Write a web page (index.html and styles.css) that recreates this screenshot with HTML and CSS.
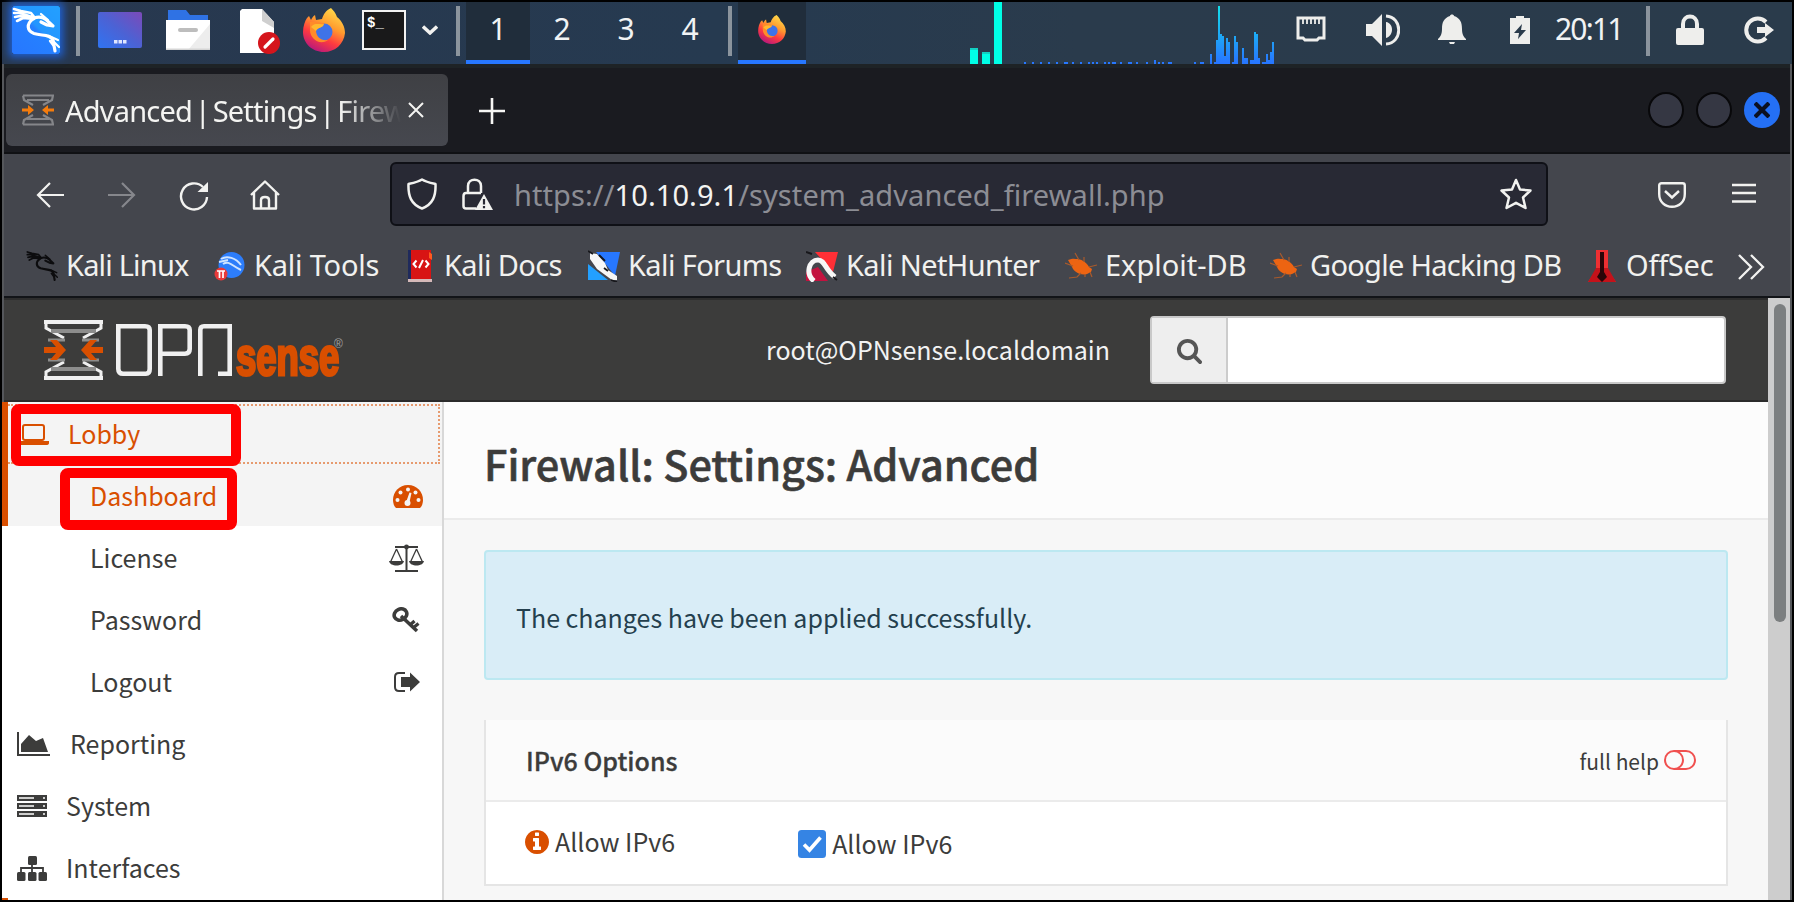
FILE: index.html
```
<!DOCTYPE html>
<html lang="en">
<head>
<meta charset="utf-8">
<title>Advanced | Settings | Firewall</title>
<link rel="stylesheet" href="styles.css">
</head>
<body>
<svg class="defs" width="0" height="0">
  <defs>
    <linearGradient id="ffx" x1="0.8" y1="0" x2="0.3" y2="1"><stop offset="0" stop-color="#ffe14d"/><stop offset=".4" stop-color="#ff9a2e"/><stop offset=".68" stop-color="#ff3b3f"/><stop offset="1" stop-color="#b5177f"/></linearGradient>
    <linearGradient id="kali" x1="0" y1="1" x2="1" y2="0"><stop offset="0" stop-color="#2777ff"/><stop offset=".5" stop-color="#2580ff"/><stop offset=".55" stop-color="#2396ff"/><stop offset="1" stop-color="#23a0ff"/></linearGradient>
    <linearGradient id="desk" x1="0" y1="1" x2="1" y2="0"><stop offset="0" stop-color="#2f74f2"/><stop offset=".5" stop-color="#4c62d4"/><stop offset="1" stop-color="#7c4ab8"/></linearGradient>
    <linearGradient id="net" gradientUnits="userSpaceOnUse" x1="0" y1="4" x2="0" y2="62"><stop offset="0" stop-color="#12e3ea"/><stop offset="1" stop-color="#2777ff"/></linearGradient>
    <symbol id="dragon" viewBox="0 0 48 48">
      <g fill="none" stroke="currentColor" stroke-linecap="round" stroke-linejoin="round">
        <path stroke-width="2.600" d="M2 3 9 5 19 7 23 12M2 7 8 7 20 11M3 11 8 10 21 13M5 15 11 12 22 13"/>
        <path stroke-width="3.200" d="M22 12C32 9 35 15 41 20L35 19 29 16"/>
        <path stroke-width="3.200" d="M21 13C14 18 15 25 22 27.500C30 30 38 28 41 34L43 45"/>
        <path stroke-width="2.200" d="M37 30 46 34M40 34 47 41M38 35 41 39M29 8 36 14"/>
      </g>
    </symbol>
    <symbol id="firefox" viewBox="0 0 42 44">
      <path fill="url(#ffx)" d="M28 0C32 4 33 6 34 9C39 13 42 19 42 25C41 36 32 44 21 44C9 44 0 35 0 24C0 18 2 13 4 10L6 8 8 12C9 10 10 8 12 7L13 12 19 11C20 7 23 2 28 0Z"/>
      <circle cx="21" cy="24" r="8.500" fill="#3f73e8"/>
      <path fill="#ff8b2a" d="M7 14C12 13 16 15 21 15L20 18C17 20 15 20 13 22C13 29 18 33 25 32C17 38 7 31 7 22Z"/>
      <path fill="#ffb92f" d="M8 19C12 14 16 17 21 16C20 20 15 19 13 23Z"/>
    </symbol>
    <symbol id="bug" viewBox="0 0 32 32">
      <path fill="#ed6412" d="M3 10C8 8 10 9 13 9C18 10 22 13 24 17L27 19 26 22 22 24C16 26 9 22 7 17Z"/>
      <path fill="none" stroke="#a95a2c" stroke-width="1.200" d="M0 13 8 16M10 3 14 10M19 7 19 12M24 17 32 15M25 22 27 27M16 23 12 27 4 28M20 24 20 27"/>
    </symbol>
  </defs>
</svg>
<div class="screen">
  <header class="panel">
    <svg class="i-kali" width="48" height="48" viewBox="0 0 48 48"><rect width="48" height="48" rx="2" fill="url(#kali)"/><use href="#dragon" width="48" height="48"/></svg>
    <i class="sep s1"></i>
    <svg class="i-desk" width="44" height="36" viewBox="0 0 44 36"><rect width="44" height="36" rx="2" fill="url(#desk)"/><path fill="#dfe6ff" d="M16 28h3.500v3.500H16zM20.500 28H24v3.500h-3.500zM25 28h3.500v3.500H25z"/></svg>
    <svg class="i-folder" width="44" height="40" viewBox="0 0 44 40"><path fill="#2f72e4" d="M2 0H20L24 5H42V12H2Z"/><path fill="#fff" d="M0 10H44V40H0Z"/><path fill="#ededed" d="M44 14V40H22Z"/><path fill="#d5d5d5" d="M0 38.500H44V40H0Z"/><rect x="12" y="18" width="20" height="4" rx="2" fill="#bdbdbd"/></svg>
    <svg class="i-doc" width="42" height="46" viewBox="0 0 42 46"><path fill="#fff" d="M0 2 2 0H22L34 13V44H0Z"/><path fill="#cfcfcf" d="M22 0 34 13V19L22 12Z"/><circle cx="29" cy="34" r="11" fill="#d5151c"/><path stroke="#fff" stroke-width="3.200" stroke-linecap="round" d="M25 38 33 30"/></svg>
    <svg class="i-ff" width="42" height="44"><use href="#firefox" width="42" height="44"/></svg>
    <div class="i-term">$_</div>
    <svg class="i-chev" width="16" height="10" viewBox="0 0 16 10"><path fill="none" stroke="#f2f2f0" stroke-width="3.400" d="M1 1.500 8 8 15 1.500"/></svg>
    <i class="sep s2"></i>
    <nav class="ws"><b class="on">1</b><b>2</b><b>3</b><b>4</b></nav>
    <i class="sep s3"></i>
    <div class="task"><svg width="28" height="29"><use href="#firefox" width="28" height="29"/></svg></div>
    <svg class="i-graph" width="304" height="62" viewBox="970 2 304 62" shape-rendering="crispEdges">
      <path fill="#00ffe6" d="M970 48h8v16h-8zM982 52h8v12h-8zM994 2h8v62h-8z"/><path fill="#12cfc2" d="M970 48h8v2h-8zM982 52h8v2h-8z"/>
      <path fill="#2777ff" d="M1024 62h2v2h-2zM1032 62h2v2h-2zM1040 62h2v2h-2zM1048 62h2v2h-2zM1056 62h2v2h-2zM1064 62h4v2h-4zM1072 62h2v2h-2zM1080 62h2v2h-2zM1088 62h2v2h-2zM1092 62h2v2h-2zM1096 62h2v2h-2zM1104 62h2v2h-2zM1108 62h2v2h-2zM1112 62h4v2h-4zM1120 62h2v2h-2zM1128 62h4v2h-4zM1136 62h2v2h-2zM1146 62h2v2h-2zM1154 60h2v4h-2zM1158 62h2v2h-2zM1162 62h2v2h-2zM1168 62h4v2h-4zM1194 62h2v2h-2zM1200 62h4v2h-4z"/>
      <path fill="url(#net)" d="M1210 64V54h2V64ZM1214 64V62h2V40h2V6h2V34h2V36h2V56h2V38h2V42h2V64ZM1232 64V62h2V36h2V42h2V64ZM1242 64V48h2V58h4V64ZM1250 64V60h4V32h2V34h2V58h2V64ZM1262 64V62h4V54h2V60h2V52h2V42h2V64Z"/>
    </svg>
    <svg class="i-eth" width="30" height="26" viewBox="0 0 30 26"><path fill="none" stroke="#eeeeec" stroke-width="3" d="M2 2H28V22H23L21 24H9L7 22H2Z"/><path stroke="#eeeeec" stroke-width="1.800" d="M7 3V8M11 3V8M15 3V8M19 3V8M23 3V8"/></svg>
    <svg class="i-vol" width="34" height="32" viewBox="0 0 34 32"><path fill="#eeeeec" d="M0 10H6L16 0V32L6 22H0ZM20 8C28 9 28 22 20 24Z"/><path fill="none" stroke="#eeeeec" stroke-width="3" d="M20 2C37 3 37 29 20 30"/></svg>
    <svg class="i-bell" width="28" height="30" viewBox="0 0 28 30"><path fill="#eeeeec" d="M12 2C12 0 16 0 16 2C22 4 24 8 24 15C24 21 26 23 28 25V26H0V25C2 23 4 21 4 15C4 8 6 4 12 2ZM11 28H17L16 30H12Z"/></svg>
    <svg class="i-bat" width="20" height="28" viewBox="0 0 20 28"><path fill="#eeeeec" fill-rule="evenodd" d="M0 2H6V0H14V2H20V28H0ZM12 8 4 17H9L8 23 16 14H11Z"/></svg>
    <span class="clock">20:11</span>
    <i class="sep s4"></i>
    <svg class="i-lock" width="28" height="32" viewBox="0 0 28 32"><path fill="#eeeeec" d="M0 16Q0 14 2 14H26Q28 14 28 16V29Q28 31 26 31H2Q0 31 0 29Z"/><path fill="none" stroke="#eeeeec" stroke-width="4" d="M7 15V10C7 0 21 0 21 10V15"/></svg>
    <svg class="i-exit" width="30" height="28" viewBox="0 0 30 28"><path fill="none" stroke="#eeeeec" stroke-width="4" d="M22 6A11.500 11.500 0 1 0 22 22"/><path fill="#eeeeec" d="M13 11H21V7L30 14 21 21V17H13Z"/></svg>
  </header>
  <div class="window">
    <div class="tabs">
      <div class="tab">
        <svg width="32" height="32" viewBox="0 0 32 32"><g fill="none" stroke="#85868a" stroke-width="2.200"><path d="M1 1.500H31L30 6 21 11M1 1.500 2 6 11 11M5 6H27M1 30.500H31L30 26 21 21M1 30.500 2 26 11 21M5 25H27"/></g><path fill="#f57c0c" d="M0 14.500H6V11L12 16 6 21V17.500H0ZM32 14.500H26V11L20 16 26 21V17.500H32Z"/></svg>
        <span class="tabtitle">Advanced | Settings | Firew</span>
        <svg width="16" height="16" viewBox="0 0 16 16"><path stroke="#f4f4f2" stroke-width="2" d="M1 1 15 15M15 1 1 15"/></svg>
      </div>
      <svg class="plus" width="26" height="26" viewBox="0 0 26 26"><path stroke="#f6f6f4" stroke-width="2.600" d="M13 0V26M0 13H26"/></svg>
      <div class="winbtns"><i></i><i></i><i class="x"><svg width="16" height="16" viewBox="0 0 16 16"><path stroke="#0b1020" stroke-width="4.200" d="M1 1 15 15M15 1 1 15"/></svg></i></div>
    </div>
    <div class="nav">
      <svg class="n1" width="28" height="26" viewBox="0 0 28 26"><path fill="none" stroke="#f2f2f0" stroke-width="2.200" d="M28 13H2M14 1 2 13 14 25"/></svg>
      <svg class="n2" width="28" height="26" viewBox="0 0 28 26"><path fill="none" stroke="#86878c" stroke-width="2.200" d="M0 13H26M14 1 26 13 14 25"/></svg>
      <svg class="n3" width="30" height="30" viewBox="0 0 30 30"><path fill="none" stroke="#f2f2f0" stroke-width="2.400" d="M28 16A13 13 0 1 1 24 6"/><path fill="#f2f2f0" d="M29 1V11H18.500Z"/></svg>
      <svg class="n4" width="30" height="30" viewBox="0 0 30 30"><path fill="none" stroke="#f2f2f0" stroke-width="2.400" stroke-linejoin="round" d="M1 15 15 1.500 29 15M4 12V28.500H26V12M11 28V20Q11 17 15 17T19 20V28"/></svg>
      <div class="url">
        <svg width="30" height="32" viewBox="0 0 30 32"><path fill="none" stroke="#f2f2f0" stroke-width="2.500" stroke-linejoin="round" d="M15 1.500C19 4 24 5 28.500 6C29 18 26 26 15 30.500C4 26 1 18 1.500 6C6 5 11 4 15 1.500Z"/></svg>
        <svg class="u2" width="31" height="32" viewBox="0 0 31 32"><path fill="none" stroke="#f2f2f0" stroke-width="2.500" d="M6 15V8C6 -.500 19 -.500 19 8V15M14 30.500H4Q1.500 30.500 1.500 28V18Q1.500 15 4 15H19"/><path fill="#f2f2f0" d="M22 16 31 32H13Z"/><path stroke="#282934" stroke-width="2.200" d="M22 21V26.500M22 28V30.200"/></svg>
        <span class="addr">https://<b>10.10.9.1</b>/system_advanced_firewall.php</span>
        <svg class="star" width="32" height="32" viewBox="0 0 32 32"><path fill="none" stroke="#f2f2f0" stroke-width="2.500" stroke-linejoin="round" d="M16 2 20 11.500 30.500 12.500 23 19.500 25.500 30 16 24.800 6.500 30 9 19.500 1.500 12.500 12 11.500Z"/></svg>
      </div>
      <svg class="n5" width="28" height="26" viewBox="0 0 28 26"><path fill="none" stroke="#f2f2f0" stroke-width="2.400" d="M3.500 1.300H24.500Q26.800 1.300 26.800 3.500V12C26.800 20 21 24.800 14 24.800S1.200 20 1.200 12V3.500Q1.200 1.300 3.500 1.300ZM7 9 14 15.500 21 9"/></svg>
      <svg class="n6" width="24" height="20" viewBox="0 0 24 20"><path stroke="#f2f2f0" stroke-width="2.400" d="M0 2H24M0 10H24M0 18.500H24"/></svg>
    </div>
    <div class="marks">
      <a class="m1"><svg class="dk" width="32" height="32"><use href="#dragon" width="32" height="32"/></svg><span>Kali Linux</span></a>
      <a class="m2"><svg width="32" height="32" viewBox="0 0 32 32"><circle cx="17.500" cy="15" r="13" fill="#2d7dfa"/><path fill="none" stroke="#cfe4ff" stroke-width="2" d="M7 9C13 5 22 8 27 15M9 14C15 10 18 16 27 20M5 12 14 10"/><circle cx="7" cy="24" r="6.500" fill="#e83a3a"/><path stroke="#fff" stroke-width="1.700" d="M3 21H11M5.500 21V28M9 21V28"/></svg><span>Kali Tools</span></a>
      <a class="m3"><svg width="32" height="32" viewBox="0 0 32 32"><path fill="#1f2a5c" d="M1 0H5V29H1Z"/><path fill="#d81414" d="M4 0H24V29H4Z"/><path fill="#d5b9b9" d="M1 29H25V32H1Z"/><path fill="#ff5a1e" d="M22 2 25 4V10L22 8Z"/><path fill="none" stroke="#fff" stroke-width="2" d="M9.500 10.500 6.500 14 9.500 17.500M18.500 10.500 21.500 14 18.500 17.500M16 10 12 18"/></svg><span>Kali Docs</span></a>
      <a class="m4"><svg width="32" height="32" viewBox="0 0 32 32"><path fill="#2777ff" d="M8 2H32L27 26Z"/><path fill="#23a0ff" d="M0 14 20 30H0Z"/><path fill="#f7f7f7" d="M2 3 9 4 17 13 20 20 29 26 29 30 24 30 9 19 2 9Z"/><path stroke="#17171b" stroke-width="1.800" d="M0 1 5 4M11 5 17 11M23 30 29 32M16 18 20 21"/></svg><span>Kali Forums</span></a>
      <a class="m5"><svg width="32" height="32" viewBox="0 0 32 32"><path fill="#ff2f36" d="M9 2H32L27 22Z"/><path fill="#c3123f" d="M0 22 12 17 22 31H0Z"/><path fill="none" stroke="#f7f7f7" stroke-width="5" d="M8 31C-1 24 3 10 12 10C19 10 19 20 29 27"/><path stroke="#17171b" stroke-width="2" d="M0 2 6 4M27 27 31 30"/></svg><span>Kali NetHunter</span></a>
      <a class="m6"><svg width="32" height="32"><use href="#bug" width="32" height="32"/></svg><span>Exploit-DB</span></a>
      <a class="m7"><svg width="32" height="32"><use href="#bug" width="32" height="32"/></svg><span>Google Hacking DB</span></a>
      <a class="m8"><svg width="28" height="32" viewBox="0 0 28 32"><path fill="#ee2f32" d="M8 0H20V20L28 32H0L8 20Z"/><path fill="#c4121a" d="M8 18 0 32H28L20 18Z"/><path fill="#2a0508" d="M12 2H16V22L19 27 14 32 9 27 12 22Z"/></svg><span>OffSec</span></a>
      <svg class="more" width="27" height="26" viewBox="0 0 27 26"><path fill="none" stroke="#f2f2f0" stroke-width="2.300" d="M1 1 13 13 1 25M13 1 25 13 13 25"/></svg>
    </div>
    <div class="view">
      <div class="page">
        <header class="top">
          <svg width="59" height="60" viewBox="0 0 59 60"><g fill="none" stroke="#f0f0f0" stroke-width="4"><path d="M0 2H59M0 58H59"/><path stroke-width="3" d="M2 3V8L20 18M57 3V8L39 18M2 57V52L20 42M57 57V52L39 42"/><path stroke="#8d8d8c" d="M7 11H52M7 49H52"/><path stroke="#8d8d8c" stroke-width="3" d="M4 20H21M38 20H55M4 40H21M38 40H55"/></g><path fill="#d94f00" d="M0 27H12L6 20H13L22 30 13 40H6L12 33H0ZM59 27H47L53 20H46L37 30 46 40H53L47 33H59Z"/></svg>
          <svg class="opn" width="116" height="52" viewBox="0 0 116 52"><g fill="none" stroke="#f0f0f0" stroke-width="4.600"><path d="M2.300 2.300H29Q33.700 2.300 33.700 6V45Q33.700 49.700 30 49.700H7Q2.300 49.700 2.300 45ZM44.300 52V2.300H69Q73.700 2.300 73.700 6V25Q73.700 29.700 69 29.700H44M84.300 52V6Q84.300 2.300 88 2.300H113.700V49.700H102"/></g></svg>
          <span class="sense">sense</span><sup class="reg">®</sup>
          <span class="user">root@OPNsense.localdomain</span>
          <div class="search"><i><svg width="27" height="27" viewBox="0 0 1792 1792"><path fill="#555" d="M1216 832q0-185-131.500-316.500t-316.500-131.500-316.500 131.500-131.500 316.500 131.500 316.500 316.500 131.500 316.500-131.500 131.500-316.500zm512 832q0 52-38 90t-90 38q-54 0-90-38l-343-342q-179 124-399 124-143 0-273.500-55.500t-225-150-150-225-55.500-273.500 55.500-273.500 150-225 225-150 273.500-55.500 273.500 55.500 225 150 150 225 55.500 273.500q0 220-124 399l343 343q37 37 37 90z"/></svg></i></div>
        </header>
        <div class="cols">
          <aside class="side">
            <div class="act">
              <div class="row lobby"><svg width="31" height="22" viewBox="0 0 31 22"><rect x="5" y="2" width="21" height="15" rx="2" fill="none" stroke="#d94f00" stroke-width="2"/><path fill="#d94f00" d="M0 18H31V20Q31 22 28 22H3Q0 22 0 20Z"/></svg><span>Lobby</span></div>
              <div class="row sub"><span>Dashboard</span><svg class="gauge" width="30" height="24" viewBox="0 0 30 24"><path fill="#d94f00" d="M15 0C24 0 30 7 30 15Q30 20 27 23H3Q0 20 0 15C0 7 6 0 15 0Z"/><g fill="#f4f4f4"><circle cx="15" cy="4.500" r="2"/><circle cx="7.500" cy="7.500" r="2"/><circle cx="22.500" cy="7.500" r="2"/><circle cx="4.500" cy="15" r="2"/><circle cx="25.500" cy="15" r="2"/><circle cx="14.500" cy="18" r="3"/><path d="M13.500 16 16.500 7.500 18.500 8 16.500 17Z"/></g></svg></div>
            </div>
            <div class="row sub"><span>License</span><svg width="35" height="28" viewBox="0 0 35 28"><g fill="none" stroke="#3c3c3b"><path stroke-width="2" d="M6 3H29M17.500 1V26M6 27H29"/><path stroke-width="1.300" d="M7.500 5 1.500 18M7.500 5 13.500 18M27.500 5 21.500 18M27.500 5 33.500 18"/></g><circle cx="17.500" cy="3" r="2.400" fill="#3c3c3b"/><path fill="#3c3c3b" d="M0 17H15C14 23 1 23 0 17ZM20 17H35C34 23 21 23 20 17Z"/></svg></div>
            <div class="row sub"><span>Password</span><svg class="in" width="28" height="26" viewBox="0 0 28 26"><ellipse cx="8.500" cy="7.500" rx="6.500" ry="5.500" transform="rotate(-25 8.500 7.500)" fill="none" stroke="#3c3c3b" stroke-width="3.600"/><path fill="none" stroke="#3c3c3b" stroke-width="3.500" d="M9 9 25 24"/><path fill="none" stroke="#3c3c3b" stroke-width="3.200" d="M18 18 22.500 14M21 21 26.500 16.500"/></svg></div>
            <div class="row sub"><span>Logout</span><svg class="in" width="26" height="20" viewBox="0 0 26 20"><path fill="none" stroke="#3c3c3b" stroke-width="2" d="M11 1H5Q1 1 1 5V15Q1 19 5 19H11"/><path fill="#3c3c3b" d="M7 5H16V0.500L26 10 16 19.500V15H7Z"/></svg></div>
            <div class="row r4"><svg width="33" height="24" viewBox="0 0 33 24"><path fill="#3c3c3b" d="M0 0H2V22H33V24H0ZM4 20V12L12 3 19 9 26 6 31 20Z"/></svg><span>Reporting</span></div>
            <div class="row r5"><svg width="30" height="22" viewBox="0 0 30 22"><path fill="#3c3c3b" d="M0 0H30V6H0ZM0 8H30V14H0ZM0 16H30V22H0Z"/><path stroke="#fff" stroke-width="1.600" d="M2 3H17M2 11H17M2 19H17M26 3H28M26 11H28M26 19H28"/></svg><span>System</span></div>
            <div class="row r6"><svg width="30" height="25" viewBox="0 0 30 25"><g fill="#3c3c3b"><rect x="11" width="9" height="9" rx="1.500"/><rect y="16" width="8.500" height="9" rx="1.500"/><rect x="11" y="16" width="8.500" height="9" rx="1.500"/><rect x="21.500" y="16" width="8.500" height="9" rx="1.500"/></g><path fill="none" stroke="#3c3c3b" stroke-width="1.800" d="M15 8V16M4 16V12H26V16"/></svg><span>Interfaces</span></div>
            <div class="next"></div>
            <div class="mark k1"></div><div class="mark k2"></div>
          </aside>
          <main>
            <h1>Firewall: Settings: Advanced</h1>
            <div class="alert">The changes have been applied successfully.</div>
            <section class="table">
              <div class="th"><b>IPv6 Options</b><small>full help</small><svg width="32" height="20" viewBox="0 0 32 20"><g fill="none" stroke="#f0504f" stroke-width="2"><rect x="1" y="1" width="30" height="18" rx="9"/><path d="M10 1A9 9 0 0 1 10 19"/></g></svg></div>
              <div class="td"><svg class="info" width="28" height="28" viewBox="0 0 1792 1792"><path fill="#d94f00" d="M1152 1376v-160q0-14-9-23t-23-9h-96v-512q0-14-9-23t-23-9h-320q-14 0-23 9t-9 23v160q0 14 9 23t23 9h96v320h-96q-14 0-23 9t-9 23v160q0 14 9 23t23 9h448q14 0 23-9t9-23zm-128-896v-160q0-14-9-23t-23-9h-192q-14 0-23 9t-9 23v160q0 14 9 23t23 9h192q14 0 23-9t9-23zm640 416q0 209-103 385.500t-279.500 279.500-385.500 103-385.500-103-279.500-279.500-103-385.500 103-385.500 279.500-279.500 385.500-103 385.500 103 279.500 279.500 103 385.500z"/></svg><span>Allow IPv6</span>
              <svg class="chk" width="28" height="28" viewBox="0 0 28 28"><rect width="28" height="28" rx="3.500" fill="#3584e4"/><path fill="none" stroke="#fff" stroke-width="3.600" d="M6 14.500 11.500 20 22.500 7.500"/></svg><span class="c2">Allow IPv6</span></div>
            </section>
          </main>
        </div>
      </div>
      <div class="scroll"><i></i></div>
    </div>
  </div>
</div>
</body>
</html>
```

FILE: styles.css
```
* { box-sizing: border-box; }
body { margin: 0; background: #000; color: #3c3c3b; font-family: "Noto Sans", sans-serif; }
svg { display: block; flex: none; }
i { display: block; flex: none; font-style: normal; }
span, b, small { white-space: nowrap; }
.defs { position: absolute; }
.screen { width: 1794px; height: 902px; padding: 2px; overflow: hidden; background: #000; }

.panel { display: flex; align-items: flex-start; height: 62px; background: linear-gradient(90deg, #28384f 0, #263a50 40%, #2a3b4c 60%, #2a3b4b 100%); }
.sep { width: 4px; height: 50px; margin-top: 4px; background: #8b949d; }
.i-kali { margin: 4px 0 0 10px; color: #fff; box-shadow: 0 0 8px 3px #1f62d8; }
.s1 { margin-left: 16px; }
.i-desk { margin: 10px 0 0 18px; }
.i-folder { margin: 8px 0 0 24px; }
.i-doc { margin: 7px 0 0 30px; }
.i-ff { margin: 6px 0 0 21px; }
.i-term { width: 44px; height: 40px; margin: 8px 0 0 17px; padding: 2px 3px; border: 2px solid #f2f2f2; background: #19191a; color: #fff; font: bold 14px/18px "Liberation Mono", monospace; }
.i-chev { margin: 23px 0 0 16px; }
.s2 { margin-left: 18px; }
.ws { display: flex; margin-left: 6px; }
.ws b { width: 64px; height: 62px; color: #f1f3f4; font-weight: 400; font-size: 30px; line-height: 54px; text-align: center; }
.ws b.on { background: #202d3b; border-bottom: 4px solid #2777ff; }
.s3 { margin-left: 6px; }
.task { width: 68px; height: 62px; margin-left: 6px; padding: 13px 20px; background: #202d3b; border-bottom: 4px solid #2777ff; }
.i-graph { margin-left: 164px; }
.i-eth { margin: 14px 0 0 22px; }
.i-vol { margin: 12px 0 0 40px; }
.i-bell { margin: 12px 0 0 38px; }
.i-bat { margin: 14px 0 0 44px; }
.clock { width: 91px; margin-left: 25px; color: #f1f3f4; font-size: 30px; line-height: 54px; letter-spacing: -1.8px; }
.i-lock { margin: 12px 0 0 26px; }
.i-exit { margin: 14px 0 0 40px; }

.window { width: 1790px; height: 836px; border-left: 2px solid #55575b; border-right: 2px solid #55575b; background: #44464d; }
.tabs { display: flex; height: 90px; padding: 6px 0 0 2px; border-top: 4px solid #1e2326; border-bottom: 2px solid #101114; background: #1a1b20; }
.tab { display: flex; align-items: center; width: 442px; height: 72px; padding-left: 16px; border-radius: 6px; background: linear-gradient(#3f4044, #46484f); }
.tabtitle { width: 340px; height: 64px; margin: 2px 3px 0 11px; overflow: hidden; color: #f4f4f2; font-size: 29px; line-height: 64px; letter-spacing: -.8px; word-spacing: -4px; -webkit-mask-image: linear-gradient(90deg, #000 275px, transparent 336px); mask-image: linear-gradient(90deg, #000 275px, transparent 336px); }
.plus { margin: 24px 0 0 31px; }
.winbtns { display: flex; gap: 12px; margin: 18px 0 0 auto; padding-right: 10px; }
.winbtns i { width: 36px; height: 36px; border: 2px solid #08080a; border-radius: 50%; background: #353743; }
.winbtns .x { display: grid; place-items: center; border: 0; background: #2470f5; }

.nav { display: flex; height: 80px; padding-top: 8px; }
.n1 { margin: 20px 0 0 32px; }
.n2 { margin: 20px 0 0 44px; }
.n3 { margin: 19px 0 0 43px; }
.n4 { margin: 18px 0 0 41px; }
.url { display: flex; width: 1158px; height: 64px; margin-left: 110px; padding: 14px 14px 14px 15px; border: 2px solid #0f1016; border-radius: 6px; background: #282934; }
.u2 { margin-left: 25px; }
.addr { margin-left: 21px; color: #8c8d94; font-size: 29px; line-height: 34px; letter-spacing: .08px; }
.addr b { color: #f4f4f2; font-weight: 400; }
.star { margin-left: auto; }
.n5 { margin: 20px 0 0 110px; }
.n6 { margin: 21px 0 0 46px; }
.marks { display: flex; height: 64px; padding: 16px 0 0 22px; border-bottom: 2px solid #121418; color: #f1f1ef; font-size: 29px; line-height: 30px; }
.marks a { display: flex; flex: none; gap: 8px; }
.dk { color: #0c0c0e; }
.m1 { width: 188px; letter-spacing: -.8px; }
.m2 { width: 193px; letter-spacing: -.2px; }
.m3 { width: 181px; letter-spacing: -.6px; }
.m3 svg { margin-right: -3px; }
.m4 { width: 218px; letter-spacing: -.6px; }
.m5 { width: 259px; letter-spacing: -.6px; }
.m6 { width: 205px; }
.m7 { width: 318px; letter-spacing: -.7px; }
.m8 { width: 150px; letter-spacing: -.25px; }
.m8 svg { margin-right: 2px; }
.more { margin-top: 4px; }

.view { display: flex; height: 602px; font-family: "Noto Sans CJK SC", sans-serif; }
.page { width: 1764px; height: 602px; background: #f7f7f7; }
.top { display: flex; height: 104px; padding: 20px 42px 0 40px; border-top: 2px solid #2d2d2d; border-bottom: 2px solid #2b2b2b; background: #3c3c3b; }
.opn { margin: 4px 0 0 13px; }
.sense { width: 104px; height: 52px; margin: 12px 0 0 4px; color: #d94f00; font: bold 51px/52px "Liberation Sans", Arial, sans-serif; -webkit-text-stroke: 3px #d94f00; transform: scaleX(.715); transform-origin: 0 0; }
.reg { margin: 17px 0 0 -6px; color: #a0a0a0; font: 12px/14px "Liberation Sans", sans-serif; }
.user { margin: 0 0 0 auto; color: #f2f2f2; font-size: 25px; line-height: 58px; }
.search { width: 576px; height: 68px; margin: -4px 0 0 40px; border: 2px solid #c9c9c9; border-radius: 4px; background: #fff; }
.search i { display: grid; place-items: center; width: 76px; height: 64px; border-right: 2px solid #ccc; background: #eee; }
.cols { display: flex; height: 498px; }
.side { position: relative; width: 442px; height: 498px; margin-left: -2px; border-right: 2px solid #d8d8d8; background: #fff; overflow: hidden; font-size: 25px; }
.act { height: 124px; padding-top: 2px; border-left: 6px solid #d94f00; background: #f4f4f4; color: #d94f00; }
.row { display: flex; align-items: center; height: 62px; padding-left: 15px; line-height: 62px; }
.row svg { margin-top: 2px; }
.lobby { height: 60px; margin-right: 2px; padding-left: 10px; border: 2px dotted #e69a6e; border-left: 0; line-height: 52px; }
.lobby svg { margin-top: 0; }
.lobby span { margin: -3px 0 0 19px; }
.sub { padding: 0 18px 0 88px; justify-content: space-between; }
.act .sub { padding-left: 82px; padding-right: 19px; }
.row .gauge { margin-top: 4px; }
.in { margin-right: 4px; }
.r4 span { margin-left: 20px; }
.r5 span, .r6 span { margin-left: 19px; }
.next { width: 6px; height: 2px; background: #d94f00; }
.mark { position: absolute; border: 10px solid #f00; border-radius: 8px; }
.k1 { left: 9px; top: 2px; width: 230px; height: 62px; }
.k2 { left: 58px; top: 66px; width: 177px; height: 62px; }
main { flex: 1; }
h1 { height: 118px; margin: 0; padding-left: 40px; border-bottom: 2px solid #ebebeb; background: #fcfcfc; font-size: 41.4px; font-weight: 500; line-height: 122px; white-space: nowrap; -webkit-text-stroke: .6px #3c3c3b; }
.alert { height: 130px; margin: 30px 40px 0; padding-left: 30px; border: 2px solid #bce8f1; border-radius: 4px; background: #d9edf7; color: #24404e; font-size: 25px; line-height: 130px; }
.table { height: 166px; margin: 40px 40px 0; border: 2px solid #e5e5e5; border-top: 0; background: #fff; }
.th { display: flex; align-items: center; height: 82px; padding: 0 30px 0 40px; border-bottom: 2px solid #ebebeb; background: #fbfbfb; font-size: 25px; line-height: 78px; }
.th b { font-weight: 500; -webkit-text-stroke: .3px #3c3c3b; }
.th small { margin: 2px 5px 0 auto; font-size: 21px; }
.td { display: flex; padding: 26px 0 0 37px; font-size: 25px; line-height: 26px; }
.td span { margin-left: 4px; }
.chk { margin: 2px 0 0 123px; }
.td .c2 { margin: 2px 0 0 6px; }
.scroll { width: 22px; padding: 6px; background: #cdcdcd; }
.scroll i { width: 12px; height: 318px; border-radius: 6px; background: #7c7f80; }
```
